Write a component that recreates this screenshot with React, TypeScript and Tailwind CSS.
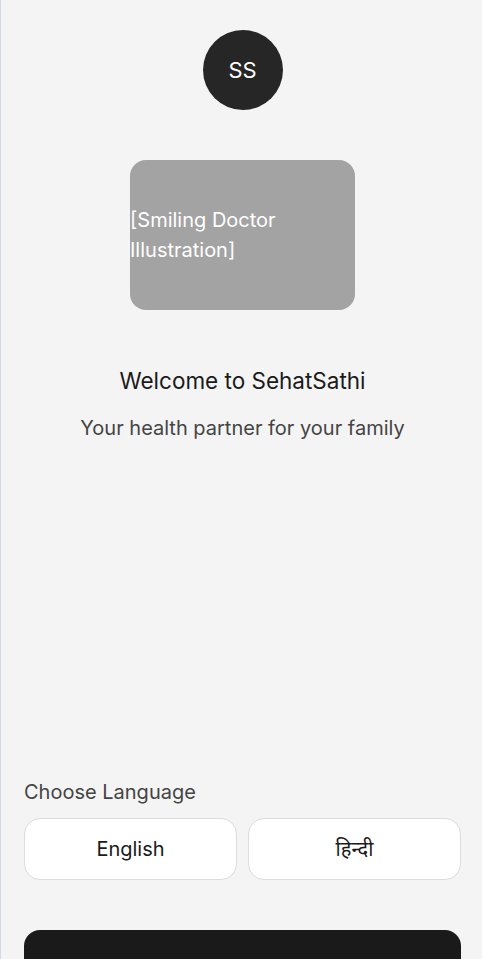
export default function App() {
  return (
    <div
      className="min-h-[1000px] w-full bg-[#f4f4f4] border-l border-[#d3d8e4] flex flex-col pl-[23px] pr-[21px]"
      style={{ fontFamily: "Inter, 'Noto Sans', 'Noto Sans Devanagari', sans-serif" }}
    >
      <div className="flex flex-col items-center pt-[30px]">
        <div className="w-[80px] h-[80px] rounded-full bg-[#262626] flex items-center justify-center text-white text-[22px]">
          SS
        </div>
        <div className="mt-[50px] w-[225px] h-[150px] rounded-[16px] bg-[#a3a3a3] flex items-center">
          <div className="text-white text-[20px] leading-[30px]">
            [Smiling Doctor
            <br />
            Illustration]
          </div>
        </div>
        <div className="mt-[56px] text-[22.5px] leading-[30px] text-[#1a1a1a]">Welcome to SehatSathi</div>
        <div className="mt-[18px] text-[20px] leading-[28px] text-[#444444]">Your health partner for your family</div>
      </div>
      <div className="mt-[336px]">
        <div className="text-[20px] leading-[28px] text-[#444444]">Choose Language</div>
        <div className="mt-[12px] grid grid-cols-2 gap-[11px]">
          <button className="h-[62px] rounded-[16px] bg-white border border-[#dcdcdc] text-[20px] text-[#1a1a1a]">
            English
          </button>
          <button className="h-[62px] rounded-[16px] bg-white border border-[#dcdcdc] text-[20px] text-[#1a1a1a]">
            हिन्दी
          </button>
        </div>
        <button className="mt-[50px] w-full h-[62px] rounded-[16px] bg-[#1a1a1a]"></button>
      </div>
    </div>
  );
}
